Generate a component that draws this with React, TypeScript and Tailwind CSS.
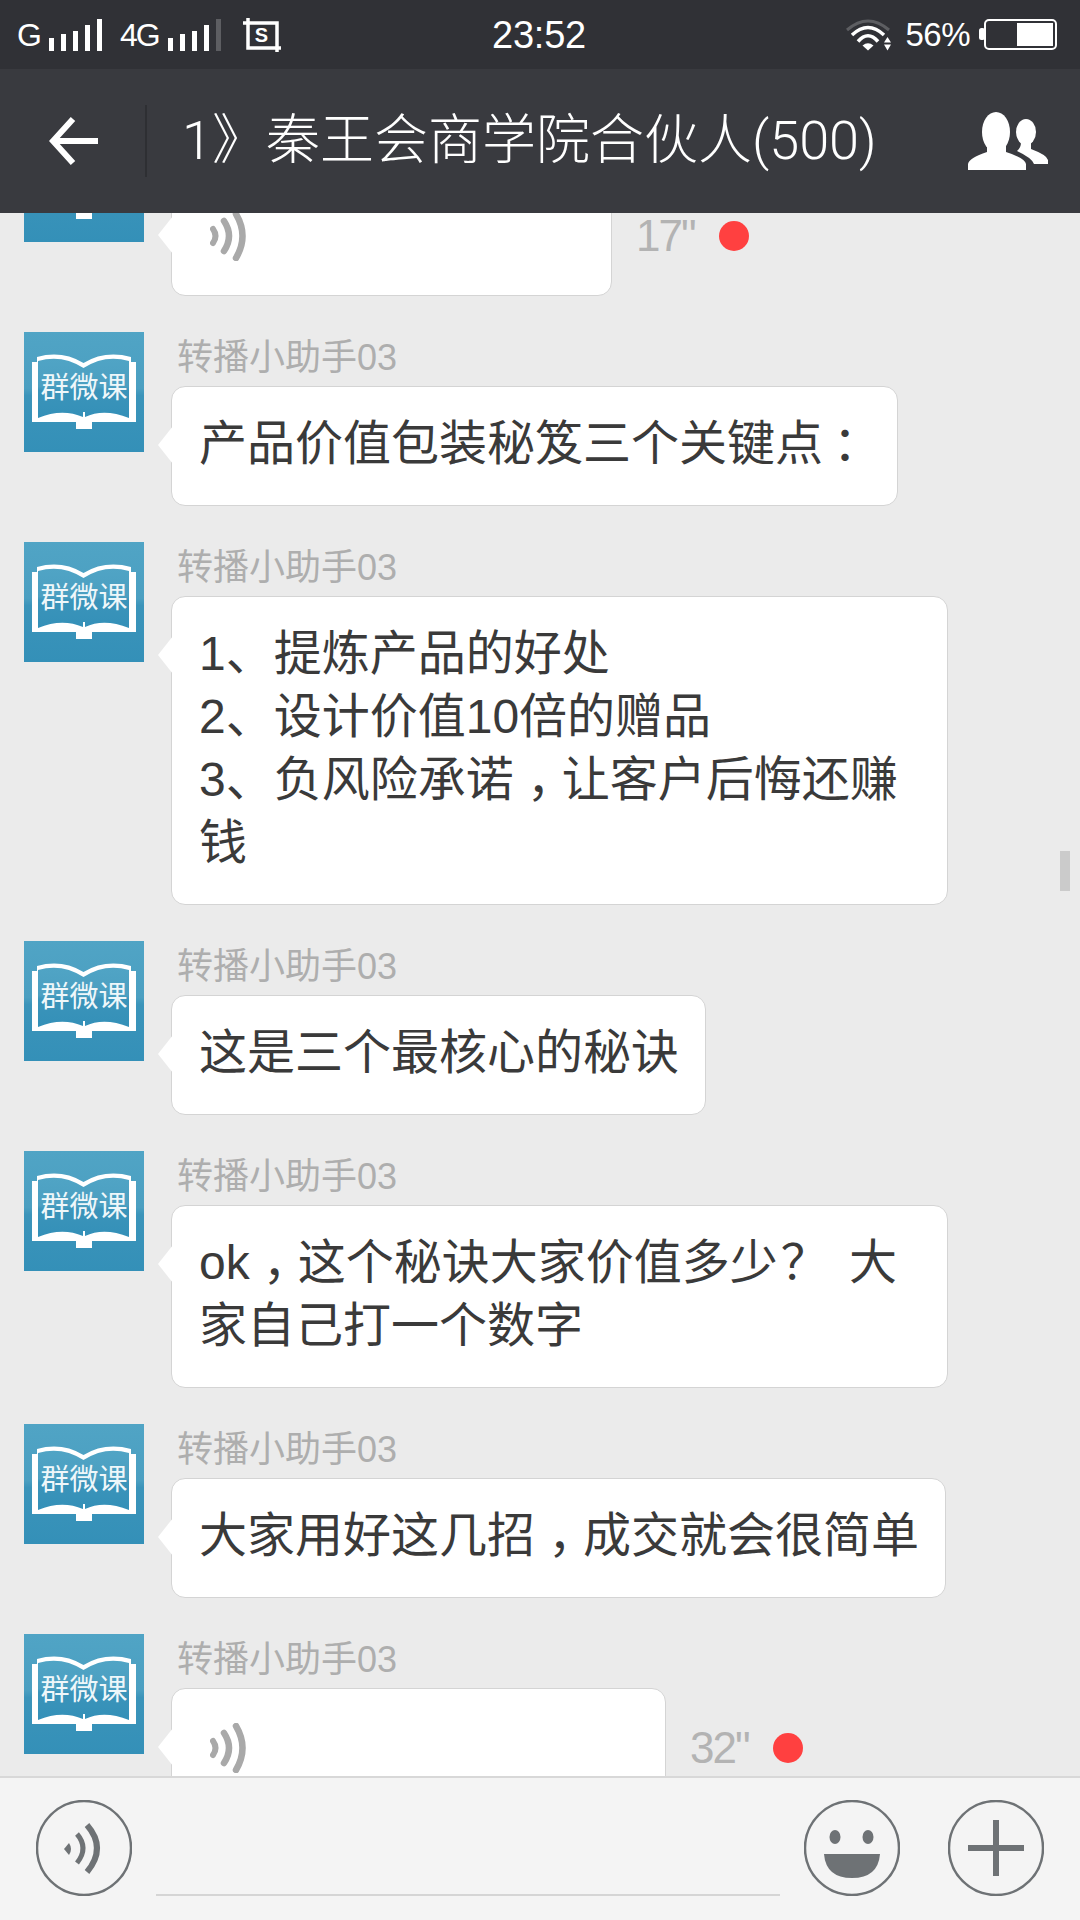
import React from 'react';

const ROBOTO = "font-['Roboto','Noto_Sans_CJK_SC',sans-serif] font-light";

type Message =
  | { kind: 'text'; lines: string[] }
  | { kind: 'voice'; seconds: string; width: string };

const MESSAGES: Message[] = [
  { kind: 'text', lines: ['产品价值包装秘笈三个关键点：'] },
  { kind: 'text', lines: ['1、提炼产品的好处', '2、设计价值10倍的赠品', '3、负风险承诺，让客户后悔还赚钱'] },
  { kind: 'text', lines: ['这是三个最核心的秘诀'] },
  { kind: 'text', lines: ['ok，这个秘诀大家价值多少？ 大家自己打一个数字'] },
  { kind: 'text', lines: ['大家用好这几招，成交就会很简单'] },
];

// punctuation sits centred in its cell on the phone's font
const PUNCT: Record<string, string> = {
  '，': 'pl-[13px] tracking-[-13px]',
  '：': 'pl-[10px] tracking-[-10px]',
  '？': 'pl-[3px] tracking-[-3px]',
};

function Line({ text }: { text: string }) {
  return (
    <div className="text-[48px] leading-[63px] text-[#3a3a3a] [word-spacing:10px]">
      {text.split(/([，：？])/).map((part, i) =>
        PUNCT[part] ? <span key={i} className={PUNCT[part]}>{part}</span> : part
      )}
    </div>
  );
}

function SignalBars({ dimLast }: { dimLast?: boolean }) {
  return (
    <svg width="53" height="34" viewBox="0 0 53 34" className="shrink-0">
      <rect x="0" y="20" width="5" height="13" fill="#fff" />
      <rect x="12" y="16" width="5" height="17" fill="#fff" />
      <rect x="24" y="13" width="5" height="20" fill="#fff" />
      <rect x="36" y="7" width="5" height="26" fill="#fff" />
      <rect x="48" y="1" width="5" height="32" fill={dimLast ? '#5d5e62' : '#fff'} />
    </svg>
  );
}

function ScreenshotIcon() {
  return (
    <svg width="38" height="34" viewBox="0 0 38 34" className="shrink-0">
      <path d="M5 0V30H38M0 5H34V34" fill="none" stroke="#fff" strokeWidth="3.5" />
      <text x="18.5" y="24" textAnchor="middle" fontSize="20" fontWeight="700" fill="#fff" fontFamily="Liberation Sans">S</text>
    </svg>
  );
}

function WifiIcon() {
  return (
    <svg width="46" height="32" viewBox="0 0 46 32" className="shrink-0">
      <path d="M1 11Q22 -7 43 11" fill="none" stroke="#5d5e62" strokeWidth="3" />
      <path d="M6 16Q22 1 38 16" fill="none" stroke="#fff" strokeWidth="3.5" />
      <path d="M12 22.5Q22 11 32 22.5" fill="none" stroke="#fff" strokeWidth="3.5" />
      <path d="M16.5 26.5Q22 22 27.5 26.5L22 31.5Z" fill="#fff" />
      <path d="M38 23.5H45L41.5 18ZM38 25.5H45L41.5 31.5Z" fill="#fff" />
    </svg>
  );
}

function Battery() {
  return (
    <svg width="78" height="32" viewBox="0 0 78 32" className="shrink-0">
      <rect x="0" y="9" width="6" height="12" rx="2.5" fill="#fff" />
      <rect x="6" y="1" width="71" height="29" rx="4" fill="none" stroke="#fff" strokeWidth="2" />
      <rect x="38" y="4" width="36" height="23" fill="#fff" />
    </svg>
  );
}

function StatusBar() {
  return (
    <div className="flex h-[69px] shrink-0 items-center bg-[#303136] text-white">
      <div className="flex flex-1 items-center pl-[17px]">
        <span className="w-[32px] text-[32px] leading-none">G</span>
        <SignalBars />
        <span className="ml-[18px] w-[48px] text-[32px] leading-none tracking-[-2px]">4G</span>
        <SignalBars dimLast />
        <div className="ml-[22px]"><ScreenshotIcon /></div>
      </div>
      <span className="ml-[4px] pt-[1px] text-[38px] leading-none tracking-[-0.2px]">23:52</span>
      <div className="flex flex-1 items-center justify-end pr-[23px]">
        <WifiIcon />
        <span className="ml-[13px] mr-[9px] text-[33px] leading-none tracking-[-0.5px]">56%</span>
        <Battery />
      </div>
    </div>
  );
}

function Header() {
  return (
    <div className="flex h-[144px] shrink-0 items-center bg-[#393a3f] text-white">
      <div className="flex w-[145px] shrink-0 justify-center pl-[3px]">
        <svg width="50" height="50" viewBox="0 0 50 50">
          <path d="M24 3L4 25L24 47M4 25H49" fill="none" stroke="#fff" strokeWidth="6" />
        </svg>
      </div>
      <div className="h-[72px] w-[2px] shrink-0 bg-[#2e2f33]" />
      <span className={`ml-[35px] flex-1 whitespace-nowrap text-[54px] leading-none ${ROBOTO}`}>1》秦王会商学院合伙人(500)</span>
      <svg width="80" height="58" viewBox="0 0 80 58" className="mr-[32px] shrink-0">
        <ellipse cx="28" cy="20" rx="14" ry="20" fill="#fff" />
        <path d="M19 34H38L38 40Q57 46 58 52V58H0V52Q1 46 19 40Z" fill="#fff" />
        <ellipse cx="58" cy="20" rx="10" ry="13" fill="#fff" />
        <path d="M53 30H63V37Q79 43 80 48V52H66Q64 46 49 39Q53 36 53 30Z" fill="#fff" />
      </svg>
    </div>
  );
}

function Avatar() {
  return (
    <svg width="120" height="120" viewBox="0 0 120 120" className="shrink-0">
      <defs>
        <linearGradient id="avatarBg" x1="0" y1="0" x2="0" y2="1">
          <stop offset="0" stopColor="#50a4c5" />
          <stop offset="0.47" stopColor="#4b9fc1" />
          <stop offset="0.53" stopColor="#3b94ba" />
          <stop offset="1" stopColor="#3490b8" />
        </linearGradient>
      </defs>
      <rect width="120" height="120" fill="url(#avatarBg)" />
      <path d="M8 30H13V25Q38 18 59.5 31Q81 18 107 25V30H112V90H68V97H52V90H8Z" fill="#fff" />
      <path d="M14 29Q38 22 59.5 36Q81 22 105 29V86Q80 76 61 85V80H59V85Q38 76 14 86Z" fill="url(#avatarBg)" />
      <text x="60" y="66" textAnchor="middle" fontSize="29" fill="#eef7fa" fontFamily="Noto Sans CJK SC">群微课</text>
    </svg>
  );
}

function VoiceWaves() {
  return (
    <svg width="36" height="50" viewBox="0 0 36 50" className="block">
      <g fill="none" stroke="#a9a9a9" strokeLinecap="round">
        <path d="M3 18Q8 25 3 32" strokeWidth="6" />
        <path d="M14 10Q24 25 14 40" strokeWidth="6.5" />
        <path d="M26 3Q39 25 26 47" strokeWidth="6.5" />
      </g>
    </svg>
  );
}

function Bubble({ className, children }: { className: string; children: React.ReactNode }) {
  return (
    <div className={`relative rounded-[14px] border border-[#d4d4d4] bg-white ${className}`}>
      <svg width="16" height="38" viewBox="0 0 16 38" className="absolute left-[-15px] top-[39px]">
        <path d="M16 0L1 19L16 38Z" fill="#fff" />
      </svg>
      {children}
    </div>
  );
}

function ChatRow({ message }: { message: Message }) {
  return (
    <div className="flex gap-[27px]">
      <Avatar />
      <div className="min-w-0 flex-1">
        <div className="ml-[6px] h-[54px] pt-[3px] text-[36px] leading-[46px] text-[#aeaeae]">转播小助手03</div>
        {message.kind === 'text' ? (
          <Bubble className="w-fit max-w-[777px] pb-[30px] pl-[27px] pr-[26px] pt-[25px]">
            {message.lines.map(line => <Line key={line} text={line} />)}
          </Bubble>
        ) : (
          <div className="flex items-center">
            <Bubble className={`pb-[28px] pl-[27px] pr-[26px] pt-[27px] ${message.width}`}>
              <div className="flex h-[63px] items-center pl-[11px]"><VoiceWaves /></div>
            </Bubble>
            <span className="ml-[24px] text-[44px] leading-none tracking-[-2px] text-[#b3b3b3]">{message.seconds}</span>
            <span className="ml-[24px] h-[30px] w-[30px] rounded-full bg-[#ff4040]" />
          </div>
        )}
      </div>
    </div>
  );
}

function InputBar() {
  return (
    <div className="flex h-[144px] shrink-0 items-start border-t-2 border-[#d8d8d8] bg-[#f4f4f4] pl-[36px] pt-[22px]">
      <svg width="96" height="96" viewBox="0 0 96 96" className="shrink-0">
        <circle cx="48" cy="48" r="47" fill="none" stroke="#6e7275" strokeWidth="2.5" />
        <path d="M28 49L33 43Q37 49 33 55Z" fill="#6e7275" />
        <path d="M41 34Q53 48 41 63" fill="none" stroke="#6e7275" strokeWidth="5" />
        <path d="M51 25Q71 48 51 72" fill="none" stroke="#6e7275" strokeWidth="6" />
      </svg>
      <div className="ml-[24px] h-[96px] w-[624px] shrink-0 border-b-2 border-[#d5d5d5]" />
      <svg width="96" height="96" viewBox="0 0 96 96" className="ml-[24px] shrink-0">
        <circle cx="48" cy="48" r="47" fill="none" stroke="#6e7275" strokeWidth="2.5" />
        <ellipse cx="31" cy="37" rx="5.5" ry="7" fill="#6e7275" />
        <ellipse cx="64" cy="37" rx="5.5" ry="7" fill="#6e7275" />
        <path d="M20 54H76Q74 78 48 78Q22 78 20 54Z" fill="#6e7275" />
      </svg>
      <svg width="96" height="96" viewBox="0 0 96 96" className="ml-[48px] shrink-0">
        <circle cx="48" cy="48" r="47" fill="none" stroke="#6e7275" strokeWidth="2.5" />
        <path d="M48 20V76M20 48H76" fill="none" stroke="#6e7275" strokeWidth="6" />
      </svg>
    </div>
  );
}

export default function App() {
  return (
    <div className="flex h-[1920px] w-[1080px] flex-col overflow-hidden font-['Liberation_Sans','Noto_Sans_CJK_SC',sans-serif]">
      <StatusBar />
      <Header />
      <div className="relative min-h-0 flex-1 overflow-hidden bg-[#ebebeb]">
        {/* list is scrolled: first row sits partly under the header */}
        <div className="mt-[-91px] flex flex-col gap-[36px] pl-[24px]">
          <ChatRow message={{ kind: 'voice', seconds: '17"', width: 'w-[441px]' }} />
          {MESSAGES.map((m, i) => <ChatRow key={i} message={m} />)}
          <ChatRow message={{ kind: 'voice', seconds: '32"', width: 'w-[495px]' }} />
        </div>
        <div className="absolute left-[1060px] top-[638px] h-[40px] w-[10px] bg-[#cbcbcb]" />
      </div>
      <InputBar />
    </div>
  );
}
